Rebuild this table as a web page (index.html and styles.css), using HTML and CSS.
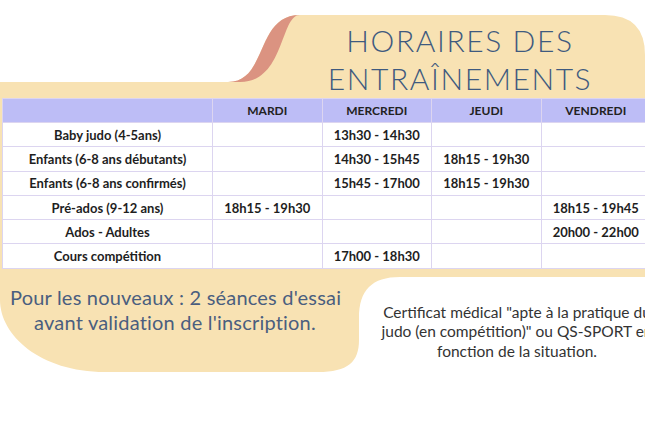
FILE: index.html
```html
<!DOCTYPE html>
<html lang="fr">
<head>
<meta charset="utf-8">
<link rel="stylesheet" href="styles.css">
</head>
<body>
<div class="page">
  <svg class="backdrop" width="645" height="429" viewBox="0 0 645 429" aria-hidden="true">
    <path class="beige" d="M0,82 L228,82 C268,82 255,15 300,15 L605,15 Q645,15 645,55 L645,277 L400,277 C372,277 359,290 359,318 L359,340 C359,362 348,372 318,372 L105,372 C40,372 0,335 0,300 Z"/>
    <path class="salmon" d="M228,82 C268,82 255,15 300,15 C280,15 285,82 240,82 Z"/>
  </svg>

  <header class="title">
    <h1>HORAIRES DES<br>ENTRAÎNEMENTS</h1>
  </header>

  <table class="schedule">
    <colgroup>
      <col class="c-name"><col class="c-day"><col class="c-day"><col class="c-day"><col class="c-day">
    </colgroup>
    <thead>
      <tr><th></th><th>MARDI</th><th>MERCREDI</th><th>JEUDI</th><th>VENDREDI</th></tr>
    </thead>
    <tbody>
      <tr><td>Baby judo (4-5ans)</td><td></td><td>13h30 - 14h30</td><td></td><td></td></tr>
      <tr><td>Enfants (6-8 ans débutants)</td><td></td><td>14h30 - 15h45</td><td>18h15 - 19h30</td><td></td></tr>
      <tr><td>Enfants (6-8 ans confirmés)</td><td></td><td>15h45 - 17h00</td><td>18h15 - 19h30</td><td></td></tr>
      <tr><td>Pré-ados (9-12 ans)</td><td>18h15 - 19h30</td><td></td><td></td><td>18h15 - 19h45</td></tr>
      <tr><td>Ados - Adultes</td><td></td><td></td><td></td><td>20h00 - 22h00</td></tr>
      <tr><td>Cours compétition</td><td></td><td>17h00 - 18h30</td><td></td><td></td></tr>
    </tbody>
  </table>

  <div class="notes">
    <p class="note-new">Pour les nouveaux : 2 séances d'essai<br>avant validation de l'inscription.</p>
    <p class="note-cert">Certificat médical "apte à la pratique du<br>judo (en compétition)" ou QS-SPORT en<br>fonction de la situation.</p>
  </div>
</div>
</body>
</html>
```
FILE: styles.css
```css
* { box-sizing: border-box; }
html, body { margin: 0; padding: 0; background: #ffffff; }
body { width: 645px; height: 429px; overflow: hidden; }

.page {
  position: relative;
  width: 645px;
  height: 429px;
  overflow: hidden;
  font-family: "Lato", "Open Sans", sans-serif;
}

.backdrop { position: absolute; left: 0; top: 0; z-index: 0; }
.beige { fill: #f8e2b3; }
.salmon { fill: #db9381; }

.title, .schedule, .notes { position: relative; z-index: 1; }

.title {
  margin-left: 290px;
  width: 340px;
  padding-top: 21px;
  height: 98px;
}
.title h1 {
  margin: 0;
  text-align: center;
  font-family: "Lato", sans-serif;
  font-weight: 300;
  font-size: 30px;
  line-height: 38px;
  color: #3f5a7f;
  letter-spacing: 1.6px;
  white-space: nowrap;
}

.schedule {
  margin-left: 2px;
  width: 648px;
  border-collapse: collapse;
  table-layout: fixed;
  background: #ffffff;
  font-weight: 700;
  font-size: 13px;
  color: #1e1e1e;
}
.c-name { width: 210px; }
.c-day { width: 109.5px; }
.schedule th, .schedule td {
  border: 1px solid #dcd5f0;
  text-align: center;
  padding: 0;
  height: 24.3px;
  white-space: nowrap;
}
.schedule thead th {
  background: #bdbdf6;
  height: 24px;
  font-size: 12px;
  color: #222;
}

.notes {
  display: flex;
  padding-top: 16px;
}
.note-new {
  margin: 0 0 0 10px;
  flex: none;
  width: 330px;
  text-align: center;
  font-family: "Lato", sans-serif;
  font-size: 20px;
  line-height: 25px;
  letter-spacing: 0.2px;
  white-space: nowrap;
  color: #4a5e7f;
}
.note-cert {
  margin: 18px 0 0 22px;
  flex: none;
  width: 310px;
  text-align: center;
  font-size: 15.5px;
  line-height: 19.5px;
  white-space: nowrap;
  color: #333333;
}
```
